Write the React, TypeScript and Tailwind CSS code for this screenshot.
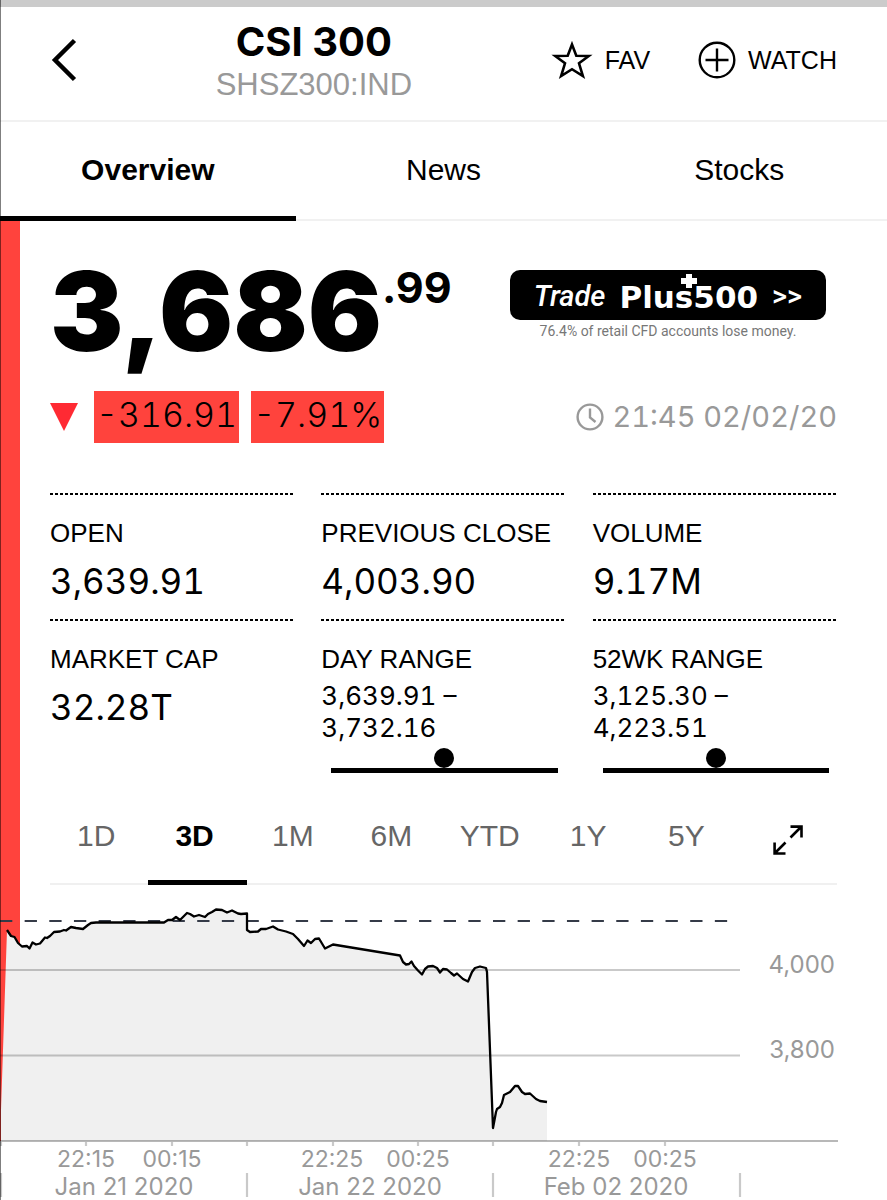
import React from "react";

const linePoints =
  "7,930 11,936 14.5,937 18,943 22,946.5 27,946 29.5,948.5 32.5,942.5 36,944.5 40,943.5 45,937.5 47,938 50,936 54,932 60,931.5 64,930 66,930.5 71,927 76,928 83,929 88,925 91,923 96,922.5 164,922.5 168,920 172,920 176,917 180,920 187,913 190,914 194,916.5 199,915 205,917 208,914 212,912 216,909.5 222,910 227,912.5 232,910.5 238,913.5 241,914 247,913.5 247,930 250,932 258,931.5 261,929 266,929 273,926.5 278,929.5 286,931.5 293,934 298,939 304,946 307.5,940.5 311,943 315,939 319,938.5 325,948.5 330,946 333,944.5 400,955.5 403,962 406,964.5 409,964 411.5,961.5 414,966 418,970.5 422,974.5 425,969 428,966.5 433,966 437,968 440,972.5 443,969 447,969.5 451,973 454,975.5 457,973.5 463,979 468,981.5 472,972 475,968 480,966.5 486,968 487,972 493,1128 496,1112 497,1109 500,1107 502,1103 504,1095 510,1092 515,1086 518,1086 522,1092 525,1094 530,1093.5 536,1099 540,1101 547,1102";

const hourTicks = [1, 86, 172, 247, 333, 418, 493, 579, 665];
const daySeparators = [1, 247, 493, 740];
const hourLabels: [number, string][] = [
  [86, "22:15"],
  [172, "00:15"],
  [332, "22:25"],
  [418, "00:25"],
  [579, "22:25"],
  [665, "00:25"],
];
const dayLabels: [number, string][] = [
  [124, "Jan 21 2020"],
  [370, "Jan 22 2020"],
  [616, "Feb 02 2020"],
];

const dots =
  "h-[2px] bg-[repeating-linear-gradient(to_right,#000_0px,#000_3px,transparent_3px,transparent_5px)]";

function Header() {
  return (
    <header className="flex items-center justify-between border-b-2 border-[#f1f1f1] px-[50px] pt-[10px] pb-[17px]">
      <button type="button" aria-label="Back" className="w-[27px]">
        <svg viewBox="0 0 27 44" className="block w-full" fill="none" stroke="#000" strokeWidth="4.5">
          <path d="M24.500 2.500 L5 22 L24.500 41.500" />
        </svg>
      </button>
      <div className="text-center">
        <h1 className="font-['Inter',sans-serif] text-[40px] leading-[50px] font-bold">CSI 300</h1>
        <p className="text-[31px] leading-[36px] text-[#999]">SHSZ300:IND</p>
      </div>
      <div className="flex items-center gap-12 text-[25px] leading-[36px]">
        <button type="button" className="flex items-center gap-3">
          <svg viewBox="0 0 42 40" className="w-[42px]" fill="none" stroke="#000" strokeWidth="2.6">
            <path d="M21 4.500 L25.300 15.700 L37.800 16 L28 23.300 L31.900 36 L21 29.200 L10.100 36 L14 23.300 L4.200 16 L16.700 15.700 Z" />
          </svg>
          FAV
        </button>
        <button type="button" className="flex items-center gap-3">
          <svg viewBox="0 0 38 38" className="w-[38px]" fill="none" stroke="#000" strokeWidth="2.4">
            <circle cx="19" cy="19" r="17.300" />
            <path d="M19 7.500 V30.500 M7.500 19 H30.500" />
          </svg>
          WATCH
        </button>
      </div>
    </header>
  );
}

function Tabs() {
  return (
    <nav className="grid grid-cols-3 text-center text-[30px] leading-[92px]">
      <a href="#overview" aria-current="page" className="border-b-[5px] border-black pt-[2px] font-bold">
        Overview
      </a>
      <a href="#news" className="border-b-2 border-[#f1f1f1] pt-[2px] pb-[3px]">
        News
      </a>
      <a href="#stocks" className="border-b-2 border-[#f1f1f1] pt-[2px] pb-[3px]">
        Stocks
      </a>
    </nav>
  );
}

function Ad() {
  return (
    <a href="#plus500" className="mr-[11px] block text-center font-['Roboto',sans-serif]">
      <span className="flex h-[50px] w-[316px] items-center justify-center gap-[14px] rounded-[10px] bg-black pt-[4px] text-[29px] font-medium text-white">
        <span className="italic">Trade</span>
        <span className="relative font-['DejaVu_Sans',sans-serif] text-[31px] leading-[46px] font-bold">
          Plus500
          <svg viewBox="0 0 16 14" className="absolute top-0 left-[62px] w-[16px]" fill="#fff">
            <path d="M5 0 H11 V4 H16 V10 H11 V14 H5 V10 H0 V4 H5 Z" />
          </svg>
        </span>
        <span>&gt;&gt;</span>
      </span>
      <span className="block text-[14px] leading-[22px] text-[#777]">
        76.4% of retail CFD accounts lose money.
      </span>
    </a>
  );
}

function Quote() {
  return (
    <section>
      <div className="flex items-start justify-between pt-[49px]">
        <p className="flex items-start font-['Inter',sans-serif]">
          <span className="text-[110px] leading-[82px] font-black">3,686</span>
          <span className="text-[43px] leading-[34px] font-bold">.99</span>
        </p>
        <Ad />
      </div>
      <div className="mt-[39px] flex items-center justify-between font-['Inter',sans-serif] tabular-nums">
        <div className="flex items-center gap-3 text-[34px] leading-[48px] font-light">
          <svg viewBox="0 0 28 28" className="mr-[4px] w-[28px]" fill="#ff2a33" role="img" aria-label="Down">
            <path d="M0 0 H28 L14 28 Z" />
          </svg>
          <span className="bg-[#ff433d] px-[2px] pb-[4px]">-316.91</span>
          <span className="bg-[#ff433d] px-[2px] pb-[4px]">-7.91%</span>
        </div>
        <p className="flex items-center gap-2 text-[29px] leading-[40px] text-[#999]">
          <svg viewBox="0 0 28 28" className="w-[28px]" fill="none" stroke="#999" strokeWidth="2.400">
            <circle cx="14" cy="14" r="12.400" />
            <path d="M14 5.500 V14.500 L19.500 19" />
          </svg>
          21:45 02/02/20
        </p>
      </div>
    </section>
  );
}

function Stat({ label, value }: { label: string; value: string }) {
  return (
    <div>
      <div className={dots} />
      <dt className="pt-[21px] text-[26px] leading-[34px]">{label}</dt>
      <dd className="pt-[9px] pb-[16px] font-['Inter',sans-serif] text-[35px] leading-[44px] tabular-nums">{value}</dd>
    </div>
  );
}

function RangeStat({ label, low, high }: { label: string; low: string; high: string }) {
  return (
    <div>
      <div className={dots} />
      <dt className="pt-[21px] text-[26px] leading-[34px]">{label}</dt>
      <dd className="pt-[4px] font-['Inter',sans-serif] text-[26px] leading-[32px] tabular-nums">
        {low} –<br />
        {high}
        <div className="mr-[8px] ml-[10px] pt-[4px]">
          <div className="mx-auto size-[20px] rounded-full bg-black" />
          <div className="h-[5px] bg-black" />
        </div>
      </dd>
    </div>
  );
}

const ranges = ["1D", "3D", "1M", "6M", "YTD", "1Y", "5Y"];

function RangeTabs() {
  return (
    <div className="mt-[13px] grid grid-cols-8 text-[30px] leading-[88px] text-[#666]">
      {ranges.map((r) =>
        r === "3D" ? (
          <button key={r} type="button" aria-pressed="true" className="border-b-[5px] border-black pt-[6px] pr-[6px] font-bold text-black">
            {r}
          </button>
        ) : (
          <button key={r} type="button" className="border-b-2 border-[#f0f0f0] pt-[6px] pr-[6px] pb-[3px]">
            {r}
          </button>
        ),
      )}
      <button type="button" aria-label="Expand chart" className="flex items-center justify-center border-b-2 border-[#f0f0f0] pt-[11px]">
        <svg viewBox="0 0 30 30" className="w-[30px]" fill="none" stroke="#000" strokeWidth="2.600">
          <path d="M17.500 12.500 L28 2 M17.500 1.600 H28.500 V12.500 M12.500 17.500 L2 28 M1.600 17.500 V28.500 H12.500" />
        </svg>
      </button>
    </div>
  );
}

function Chart() {
  return (
    <svg
      viewBox="0 885 887 315"
      className="block w-full font-['Inter',sans-serif] text-[24px]"
      role="img"
      aria-label="CSI 300, three days"
    >
      <rect x="0" y="1141" width="887" height="59" fill="#fff" />
      <polygon points={`1,1141 1,1110 ${linePoints} 547,1141`} fill="#f0f0f0" />
      <g stroke="#000" strokeOpacity="0.21" strokeWidth="2.200">
        <path d="M0 970 H740 M0 1055.500 H740" />
        <path d="M0 1141 H838" strokeOpacity="0.28" />
        {hourTicks.map((x) => (
          <path key={x} d={`M${x} 1142 V1146`} />
        ))}
        {daySeparators.map((x) => (
          <path key={x} d={`M${x} 1173 V1197`} />
        ))}
      </g>
      <path d="M0 921 H728" stroke="#353b48" strokeWidth="2" strokeDasharray="12.300 12.350" />
      <polyline points={linePoints} fill="none" stroke="#000" strokeWidth="2.300" strokeLinejoin="round" />
      <g fill="#999">
        <text x="835" y="973" textAnchor="end">4,000</text>
        <text x="835" y="1058" textAnchor="end">3,800</text>
        {hourLabels.map(([x, label]) => (
          <text key={x} x={x} y="1167" textAnchor="middle" className="text-[23px]">{label}</text>
        ))}
        {dayLabels.map(([x, label]) => (
          <text key={x} x={x} y="1195" textAnchor="middle">{label}</text>
        ))}
      </g>
    </svg>
  );
}

export default function App() {
  return (
    <div className="relative bg-white font-['Liberation_Sans',Arial,sans-serif] text-black">
      <div className="h-[7px] bg-[#cbcbcb]" />
      <Header />
      <Tabs />
      <main className="bg-[linear-gradient(to_right,#ff433d_20px,transparent_20px)]">
        <div className="px-[50px]">
          <Quote />
          <dl className="mt-[50px] grid grid-cols-3 gap-x-[27px]">
            <Stat label="OPEN" value="3,639.91" />
            <Stat label="PREVIOUS CLOSE" value="4,003.90" />
            <Stat label="VOLUME" value="9.17M" />
            <Stat label="MARKET CAP" value="32.28T" />
            <RangeStat label="DAY RANGE" low="3,639.91" high="3,732.16" />
            <RangeStat label="52WK RANGE" low="3,125.30" high="4,223.51" />
          </dl>
          <RangeTabs />
        </div>
        <Chart />
      </main>
      <div className="absolute inset-y-0 left-0 w-px bg-black/50" />
    </div>
  );
}
